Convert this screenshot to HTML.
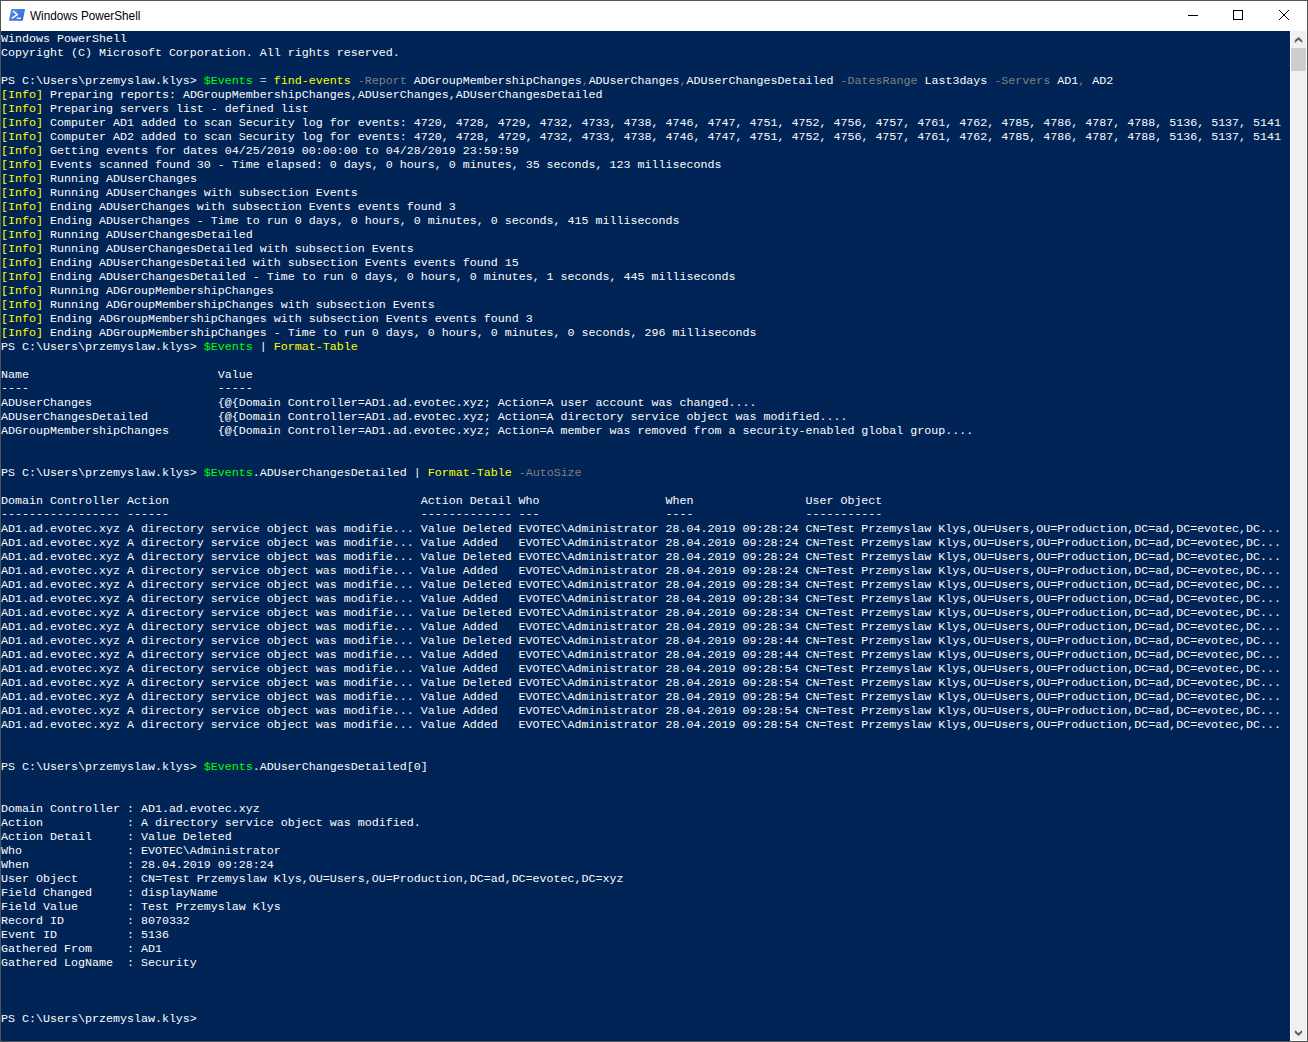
<!DOCTYPE html>
<html><head><meta charset="utf-8"><style>
html,body{margin:0;padding:0;width:1308px;height:1042px;overflow:hidden;background:#fff}
#frame{position:absolute;left:0;top:0;width:1306px;height:1040px;border:1px solid #545454;background:#fff}
#title{position:absolute;left:1px;top:1px;width:1306px;height:30px;background:#fff}
#ttl{position:absolute;left:29px;top:7px;font-family:"Liberation Sans",sans-serif;font-size:12.5px;line-height:16px;color:#000;transform:scaleX(0.94);transform-origin:0 0;white-space:nowrap}
#con{position:absolute;left:1px;top:31px;width:1289px;height:1010px;background:#012456;overflow:hidden}
pre{margin:0;font-family:"Liberation Mono",monospace;font-size:11.67px;line-height:14px;color:#fcfcfe;padding-top:1px}
.y{color:#ffff00}.g{color:#00ff00}.d{color:#808080}.o{color:#c0c0c0}.dl{position:relative;top:-1px}
#sb{position:absolute;left:1290px;top:31px;width:17px;height:1010px;background:#f0f0f0;box-shadow:inset 1px 0 0 #fff,inset -1px 0 0 #fafafa,inset 0 -1px 0 #fff}
#thumb{position:absolute;left:1px;top:17px;width:15px;height:23px;background:#cdcdcd}
</style></head><body>
<div id="frame"></div>
<div id="title">
<svg style="position:absolute;left:7px;top:7px" width="18" height="14" viewBox="0 0 18 14">
<defs><linearGradient id="pg" x1="0" y1="0" x2="1" y2="1"><stop offset="0" stop-color="#5a93f5"/><stop offset="1" stop-color="#2f62c9"/></linearGradient></defs>
<path d="M3.9 1.1 H16.6 Q17.1 1.1 17 1.6 L14.8 12.3 Q14.6 12.85 14.1 12.85 H1.4 Q0.9 12.85 1 12.3 L3.2 1.6 Q3.4 1.1 3.9 1.1 Z" fill="url(#pg)"/>
<path d="M5.2 3 L9.2 6.6 L3.9 10.4" stroke="#fff" stroke-width="1.5" fill="none"/>
<path d="M8.7 10.3 H13" stroke="#fff" stroke-width="1.3"/>
</svg>
<div id="ttl">Windows PowerShell</div>
<svg style="position:absolute;left:0;top:0" width="1306" height="30">
<path d="M1187 14.5 H1197" stroke="#000" stroke-width="1"/>
<rect x="1232.5" y="9.5" width="9" height="9" stroke="#000" fill="none" stroke-width="1"/>
<path d="M1278 9 L1288 19 M1288 9 L1278 19" stroke="#000" stroke-width="1"/>
</svg>
</div>
<div id="con"><pre>Windows PowerShell
Copyright (C) Microsoft Corporation. All rights reserved.

PS C:\Users\przemyslaw.klys&gt; <span class="g">$Events</span> <span class="o">=</span> <span class="y">find-events</span> <span class="d">-Report</span> ADGroupMembershipChanges<span class="d">,</span>ADUserChanges<span class="d">,</span>ADUserChangesDetailed <span class="d">-DatesRange</span> Last3days <span class="d">-Servers</span> AD1<span class="d">,</span> AD2
<span class="y">[Info]</span> Preparing reports: ADGroupMembershipChanges,ADUserChanges,ADUserChangesDetailed
<span class="y">[Info]</span> Preparing servers list - defined list
<span class="y">[Info]</span> Computer AD1 added to scan Security log for events: 4720, 4728, 4729, 4732, 4733, 4738, 4746, 4747, 4751, 4752, 4756, 4757, 4761, 4762, 4785, 4786, 4787, 4788, 5136, 5137, 5141
<span class="y">[Info]</span> Computer AD2 added to scan Security log for events: 4720, 4728, 4729, 4732, 4733, 4738, 4746, 4747, 4751, 4752, 4756, 4757, 4761, 4762, 4785, 4786, 4787, 4788, 5136, 5137, 5141
<span class="y">[Info]</span> Getting events for dates 04/25/2019 00:00:00 to 04/28/2019 23:59:59
<span class="y">[Info]</span> Events scanned found 30 - Time elapsed: 0 days, 0 hours, 0 minutes, 35 seconds, 123 milliseconds
<span class="y">[Info]</span> Running ADUserChanges
<span class="y">[Info]</span> Running ADUserChanges with subsection Events
<span class="y">[Info]</span> Ending ADUserChanges with subsection Events events found 3
<span class="y">[Info]</span> Ending ADUserChanges - Time to run 0 days, 0 hours, 0 minutes, 0 seconds, 415 milliseconds
<span class="y">[Info]</span> Running ADUserChangesDetailed
<span class="y">[Info]</span> Running ADUserChangesDetailed with subsection Events
<span class="y">[Info]</span> Ending ADUserChangesDetailed with subsection Events events found 15
<span class="y">[Info]</span> Ending ADUserChangesDetailed - Time to run 0 days, 0 hours, 0 minutes, 1 seconds, 445 milliseconds
<span class="y">[Info]</span> Running ADGroupMembershipChanges
<span class="y">[Info]</span> Running ADGroupMembershipChanges with subsection Events
<span class="y">[Info]</span> Ending ADGroupMembershipChanges with subsection Events events found 3
<span class="y">[Info]</span> Ending ADGroupMembershipChanges - Time to run 0 days, 0 hours, 0 minutes, 0 seconds, 296 milliseconds
PS C:\Users\przemyslaw.klys&gt; <span class="g">$Events</span> | <span class="y">Format-Table</span>

Name                           Value
<span class="dl">----                           -----</span>
ADUserChanges                  {@{Domain Controller=AD1.ad.evotec.xyz; Action=A user account was changed....
ADUserChangesDetailed          {@{Domain Controller=AD1.ad.evotec.xyz; Action=A directory service object was modified....
ADGroupMembershipChanges       {@{Domain Controller=AD1.ad.evotec.xyz; Action=A member was removed from a security-enabled global group....


PS C:\Users\przemyslaw.klys&gt; <span class="g">$Events</span>.ADUserChangesDetailed | <span class="y">Format-Table</span> <span class="d">-AutoSize</span>

Domain Controller Action                                    Action Detail Who                  When                User Object
<span class="dl">----------------- ------                                    ------------- ---                  ----                -----------</span>
AD1.ad.evotec.xyz A directory service object was modifie... Value Deleted EVOTEC\Administrator 28.04.2019 09:28:24 CN=Test Przemyslaw Klys,OU=Users,OU=Production,DC=ad,DC=evotec,DC...
AD1.ad.evotec.xyz A directory service object was modifie... Value Added   EVOTEC\Administrator 28.04.2019 09:28:24 CN=Test Przemyslaw Klys,OU=Users,OU=Production,DC=ad,DC=evotec,DC...
AD1.ad.evotec.xyz A directory service object was modifie... Value Deleted EVOTEC\Administrator 28.04.2019 09:28:24 CN=Test Przemyslaw Klys,OU=Users,OU=Production,DC=ad,DC=evotec,DC...
AD1.ad.evotec.xyz A directory service object was modifie... Value Added   EVOTEC\Administrator 28.04.2019 09:28:24 CN=Test Przemyslaw Klys,OU=Users,OU=Production,DC=ad,DC=evotec,DC...
AD1.ad.evotec.xyz A directory service object was modifie... Value Deleted EVOTEC\Administrator 28.04.2019 09:28:34 CN=Test Przemyslaw Klys,OU=Users,OU=Production,DC=ad,DC=evotec,DC...
AD1.ad.evotec.xyz A directory service object was modifie... Value Added   EVOTEC\Administrator 28.04.2019 09:28:34 CN=Test Przemyslaw Klys,OU=Users,OU=Production,DC=ad,DC=evotec,DC...
AD1.ad.evotec.xyz A directory service object was modifie... Value Deleted EVOTEC\Administrator 28.04.2019 09:28:34 CN=Test Przemyslaw Klys,OU=Users,OU=Production,DC=ad,DC=evotec,DC...
AD1.ad.evotec.xyz A directory service object was modifie... Value Added   EVOTEC\Administrator 28.04.2019 09:28:34 CN=Test Przemyslaw Klys,OU=Users,OU=Production,DC=ad,DC=evotec,DC...
AD1.ad.evotec.xyz A directory service object was modifie... Value Deleted EVOTEC\Administrator 28.04.2019 09:28:44 CN=Test Przemyslaw Klys,OU=Users,OU=Production,DC=ad,DC=evotec,DC...
AD1.ad.evotec.xyz A directory service object was modifie... Value Added   EVOTEC\Administrator 28.04.2019 09:28:44 CN=Test Przemyslaw Klys,OU=Users,OU=Production,DC=ad,DC=evotec,DC...
AD1.ad.evotec.xyz A directory service object was modifie... Value Added   EVOTEC\Administrator 28.04.2019 09:28:54 CN=Test Przemyslaw Klys,OU=Users,OU=Production,DC=ad,DC=evotec,DC...
AD1.ad.evotec.xyz A directory service object was modifie... Value Deleted EVOTEC\Administrator 28.04.2019 09:28:54 CN=Test Przemyslaw Klys,OU=Users,OU=Production,DC=ad,DC=evotec,DC...
AD1.ad.evotec.xyz A directory service object was modifie... Value Added   EVOTEC\Administrator 28.04.2019 09:28:54 CN=Test Przemyslaw Klys,OU=Users,OU=Production,DC=ad,DC=evotec,DC...
AD1.ad.evotec.xyz A directory service object was modifie... Value Added   EVOTEC\Administrator 28.04.2019 09:28:54 CN=Test Przemyslaw Klys,OU=Users,OU=Production,DC=ad,DC=evotec,DC...
AD1.ad.evotec.xyz A directory service object was modifie... Value Added   EVOTEC\Administrator 28.04.2019 09:28:54 CN=Test Przemyslaw Klys,OU=Users,OU=Production,DC=ad,DC=evotec,DC...


PS C:\Users\przemyslaw.klys&gt; <span class="g">$Events</span>.ADUserChangesDetailed[0]


Domain Controller : AD1.ad.evotec.xyz
Action            : A directory service object was modified.
Action Detail     : Value Deleted
Who               : EVOTEC\Administrator
When              : 28.04.2019 09:28:24
User Object       : CN=Test Przemyslaw Klys,OU=Users,OU=Production,DC=ad,DC=evotec,DC=xyz
Field Changed     : displayName
Field Value       : Test Przemyslaw Klys
Record ID         : 8070332
Event ID          : 5136
Gathered From     : AD1
Gathered LogName  : Security



PS C:\Users\przemyslaw.klys&gt;</pre></div>
<div id="sb"><div id="thumb"></div>
<svg style="position:absolute;left:0;top:0" width="17" height="1010">
<path d="M4.8 12 L4.8 9.2 L8.5 6 L12.2 9.2 L12.2 12 L8.5 8.7 Z" fill="#606060"/>
<path d="M4.9 999 L4.9 1001.8 L8.5 1005 L12 1001.8 L12 999 L8.5 1002.3 Z" fill="#606060"/>
</svg>
</div>
</body></html>
